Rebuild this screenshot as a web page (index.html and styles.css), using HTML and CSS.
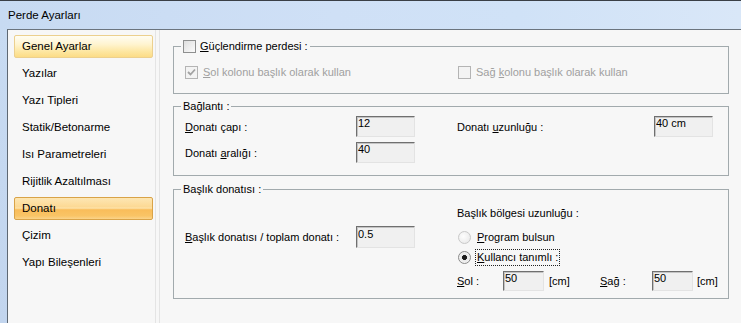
FILE: index.html
```
<!DOCTYPE html>
<html lang="tr">
<head>
    <meta charset="UTF-8">
    <title>Perde Ayarları</title>
    <link rel="stylesheet" href="styles.css">
</head>
<body>
    <div class="window">
        <div class="titlebar">Perde Ayarları</div>
        <div class="frame">
            <div class="client">
                <ul class="nav">
                    <li class="nav-item selected">Genel Ayarlar</li>
                    <li class="nav-item">Yazılar</li>
                    <li class="nav-item">Yazı Tipleri</li>
                    <li class="nav-item">Statik/Betonarme</li>
                    <li class="nav-item">Isı Parametreleri</li>
                    <li class="nav-item">Rijitlik Azaltılması</li>
                    <li class="nav-item hot">Donatı</li>
                    <li class="nav-item">Çizim</li>
                    <li class="nav-item">Yapı Bileşenleri</li>
                </ul>

                <div class="panel">
                    <fieldset class="group">
                        <legend class="legend"><span class="box"></span><u>G</u>üçlendirme perdesi :</legend>
                        <div class="check-row">
                            <label class="opt opt-left disabled"><span class="box off checked"><svg width="11" height="11" viewBox="0 0 11 11"><path d="M2 5 L4.5 7.5 L9 2.5" fill="none" stroke="#a2a2a2" stroke-width="1.8"/></svg></span><span><u>S</u>ol kolonu başlık olarak kullan</span></label>
                            <label class="opt disabled"><span class="box off"></span><span>Sağ <u>k</u>olonu başlık olarak kullan</span></label>
                        </div>
                    </fieldset>

                    <fieldset class="group group-mid">
                        <legend class="legend">Bağlantı :</legend>
                        <div class="cols cols-mid">
                            <div class="col-left">
                                <div class="row">
                                    <span class="label"><u>D</u>onatı çapı :</span>
                                    <input class="field" type="text" value="12" readonly>
                                </div>
                                <div class="row">
                                    <span class="label">Donatı <u>a</u>ralığı :</span>
                                    <input class="field" type="text" value="40" readonly>
                                </div>
                            </div>
                            <div class="col-right">
                                <div class="row">
                                    <span class="label label-wide">Donatı <u>u</u>zunluğu :</span>
                                    <input class="field" type="text" value="40 cm" readonly>
                                </div>
                            </div>
                        </div>
                    </fieldset>

                    <fieldset class="group group-low">
                        <legend class="legend">Başlık donatısı :</legend>
                        <div class="cols cols-low">
                            <div class="col-left col-pad">
                                <div class="row">
                                    <span class="label"><u>B</u>aşlık donatısı / toplam donatı :</span>
                                    <input class="field field-tall" type="text" value="0.5" readonly>
                                </div>
                            </div>
                            <div class="col-right col-stack">
                                <div class="caption">Başlık bölgesi uzunluğu :</div>
                                <label class="radio-row"><span class="radio off"></span><span class="radio-text"><u>P</u>rogram bulsun</span></label>
                                <label class="radio-row"><span class="radio on"></span><span class="radio-text focus"><u>K</u>ullancı tanımlı :</span></label>
                                <div class="len-row">
                                    <span class="len-label"><u>S</u>ol :</span>
                                    <input class="field field-small" type="text" value="50" readonly>
                                    <span class="unit">[cm]</span>
                                    <span class="len-label len-right"><u>S</u>ağ :</span>
                                    <input class="field field-small" type="text" value="50" readonly>
                                    <span class="unit unit-last">[cm]</span>
                                </div>
                            </div>
                        </div>
                    </fieldset>
                </div>
            </div>
        </div>
    </div>
</body>
</html>
```

FILE: styles.css
```
body {
    margin: 0;
    background: #c5d8ef;
    font-family: "Liberation Sans", Arial, sans-serif;
    font-size: 11px;
    color: #000;
    overflow: hidden;
}

.window {
    height: 323px;
    display: flex;
    flex-direction: column;
}

.titlebar {
    height: 28px;
    line-height: 28px;
    padding-left: 8px;
    font-size: 11.5px;
    border-top: 1px solid #3a3f46;
    background: linear-gradient(90deg, #c7daf2 0%, #cfe0f6 45%, #d0e2f7 70%, #d9e7f8 100%);
}

.frame {
    flex: 1;
    display: flex;
    min-height: 0;
    padding-left: 7px;
    background: linear-gradient(#c8dbf2, #c2d5ee);
}

.client {
    flex: 1;
    display: flex;
    background: #f7f7f7;
    border-top: 1px solid #6b747e;
    border-left: 1px solid #5e6873;
}

/* left menu */
.nav {
    width: 148px;
    box-sizing: border-box;
    margin: 0;
    padding: 5px 0 0 6px;
    list-style: none;
    border-right: 1px solid #e4e4e4;
}
.nav-item {
    width: 139px;
    height: 23px;
    box-sizing: border-box;
    line-height: 21px;
    padding-left: 7px;
    margin-bottom: 4px;
    font-size: 11.5px;
    border: 1px solid transparent;
    border-radius: 2px;
}
.nav-item.selected {
    border-color: #ecd08e;
    background: linear-gradient(#fffdf3 0%, #fff4cf 40%, #fde6a0 75%, #fcdc86 100%);
}
.nav-item.hot {
    border-color: #d9a348;
    background: linear-gradient(#fde6b3 0%, #fcd994 42%, #fde3ab 48%, #f9bd5a 56%, #f9c466 85%, #fbd48a 100%);
}

/* right panel */
.panel {
    flex: 1;
    margin-left: 3px;
    padding: 10px 12px 0 13px;
    border-left: 1px solid #e4e4e4;
}

.group {
    margin: 0;
    padding: 0;
    min-width: 0;
    border: 1px solid #a2aaad;
}
.group-mid { margin-top: 6px; }
.group-low { margin-top: 7px; }

.legend {
    margin-left: 7px;
    padding: 0 2px;
    height: 13px;
    line-height: 13px;
}
.legend .box { margin-right: 4px; }

u { text-decoration: underline; text-underline-offset: 1px; }

.box {
    display: inline-block;
    width: 13px;
    height: 13px;
    box-sizing: border-box;
    vertical-align: top;
    border: 1px solid #8e8f8f;
    background: linear-gradient(135deg, #dedede, #fbfbfb);
}
.box.off {
    border-color: #b4b4b4;
    background: #f3f3f3;
}
.box svg { display: block; }

.check-row {
    display: flex;
    padding: 13px 0 14px 11px;
    line-height: 13px;
}
.opt { display: flex; }
.opt .box { margin-right: 5px; }
.opt-left { width: 273px; }
.disabled { color: #a0a0a0; }

.cols { display: flex; padding-left: 11px; }
.cols-mid { padding-top: 3px; padding-bottom: 12px; }
.cols-low { height: 102px; }

.col-left { width: 272px; }
.col-pad { padding-top: 30px; }

.row {
    display: flex;
    align-items: center;
    margin-bottom: 5px;
}
.row:last-child { margin-bottom: 0; }
.label { width: 171px; }
.label-wide { width: 197px; }

.field {
    box-sizing: border-box;
    width: 59px;
    height: 21px;
    margin: 0;
    padding: 0 1px 7px 1px;
    font: inherit;
    color: #000;
    background: #f0f0f0;
    border: 1px solid;
    border-color: #6f6f6f #e3e3e3 #e3e3e3 #6f6f6f;
    box-shadow: inset 1px 1px 0 #c4c4c4;
    outline: none;
}
.field-tall { height: 22px; }
.field-small { width: 41px; height: 20px; padding-bottom: 6px; }

.col-stack { padding-top: 11px; }
.caption { height: 13px; line-height: 13px; margin-bottom: 7px; }

.radio-row {
    display: flex;
    align-items: center;
    height: 20px;
}
.radio {
    width: 13px;
    height: 13px;
    box-sizing: border-box;
    margin: 0 4px 0 1px;
    border-radius: 50%;
}
.radio.off {
    border: 1px solid #c9c9c9;
    background: radial-gradient(circle at 40% 40%, #fdfdfd, #e6e6e6);
}
.radio.on {
    border: 1px solid #8a8a8a;
    background: radial-gradient(circle, #1c1c1c 0, #1c1c1c 2.2px, #e9e9e9 2.8px, #fafafa 100%);
}
.radio-text {
    padding: 1px 1px 2px 1px;
    border: 1px dotted transparent;
}
.radio-text.focus { border-color: #222; }

.len-row {
    display: flex;
    align-items: center;
    margin-top: 4px;
    height: 20px;
}
.len-label { width: 46px; }
.len-right { width: 52px; }
.unit { width: 51px; margin-left: 5px; }
.unit-last { width: auto; margin-left: 4px; }
```
